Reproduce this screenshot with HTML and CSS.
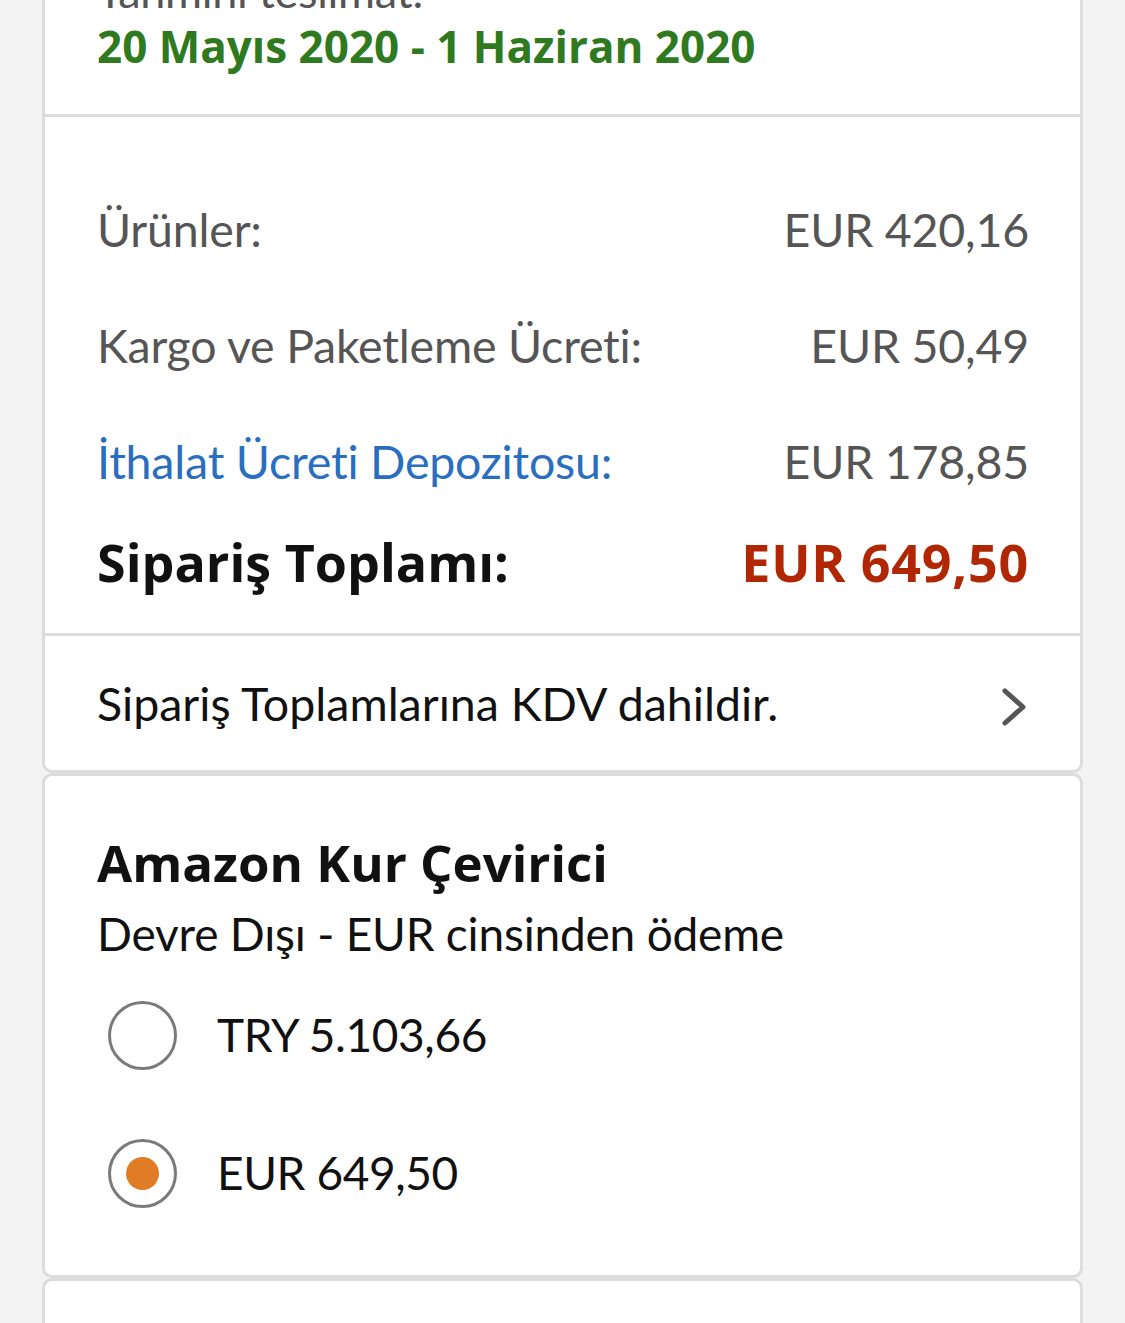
FILE: index.html
```html
<!DOCTYPE html>
<html lang="tr">
<head>
<meta charset="utf-8">
<title>Sipariş Özeti</title>
<link rel="stylesheet" href="styles.css">
</head>
<body>
<main class="page">
  <section class="card card-order">
    <div class="delivery">
      <div class="delivery-label">Tahmini teslimat:</div>
      <div class="delivery-date">20 Mayıs 2020 - 1 Haziran 2020</div>
    </div>
    <div class="summary">
      <div class="row"><span>Ürünler:</span><span>EUR 420,16</span></div>
      <div class="row"><span>Kargo ve Paketleme Ücreti:</span><span>EUR 50,49</span></div>
      <div class="row"><span class="link">İthalat Ücreti Depozitosu:</span><span>EUR 178,85</span></div>
      <div class="row total"><span>Sipariş Toplamı:</span><span class="price">EUR 649,50</span></div>
    </div>
    <div class="vat">
      <span>Sipariş Toplamlarına KDV dahildir.</span>
      <svg class="chevron" width="26" height="38" viewBox="0 0 26 38"><path d="M4 3 L22 19 L4 35" fill="none" stroke="#555" stroke-width="5" stroke-linecap="round" stroke-linejoin="round"/></svg>
    </div>
  </section>
  <section class="card card-currency">
    <h2 class="title">Amazon Kur Çevirici</h2>
    <div class="subtitle">Devre Dışı - EUR cinsinden ödeme</div>
    <div class="option"><span class="radio"></span><span>TRY 5.103,66</span></div>
    <div class="option"><span class="radio checked"></span><span>EUR 649,50</span></div>
  </section>
  <section class="card card-next"></section>
</main>
</body>
</html>
```
FILE: styles.css
```css
html, body {
  margin: 0;
  padding: 0;
}
body {
  background: #f3f3f3;
  font-family: "Lato", "Noto Sans", sans-serif;
  color: #111;
  overflow: hidden;
}
.page {
  padding: 0 42px;
  margin-top: -43px;
}
.card {
  background: #fff;
  border: 3px solid #dcdcdc;
  border-radius: 10px;
}
.delivery {
  padding: 6px 51px 38px 52px;
  border-bottom: 3px solid #dcdcdc;
}
.delivery-label {
  font-size: 45px;
  line-height: 50px;
  color: #555;
  letter-spacing: -0.3px;
}
.delivery-date {
  font-family: "Open Sans", "Lato", sans-serif;
  font-size: 44px;
  line-height: 60px;
  font-weight: 700;
  color: #2f7a1f;
}
.summary {
  padding: 54px 51px 28px 52px;
  border-bottom: 3px solid #dcdcdc;
}
.row {
  display: flex;
  justify-content: space-between;
  font-size: 46.5px;
  letter-spacing: -0.2px;
  line-height: 116px;
  color: #555;
}
.link {
  color: #2a6ebf;
}
.row.total {
  font-family: "Open Sans", "Lato", sans-serif;
  font-size: 52px;
  letter-spacing: 0;
  line-height: 86px;
  font-weight: 700;
  color: #111;
}
.price {
  color: #b12704;
  letter-spacing: 0.8px;
}
.vat {
  display: flex;
  justify-content: space-between;
  align-items: center;
  padding: 9px 53px 9px 52px;
  font-size: 46.5px;
  line-height: 116px;
  color: #111;
}
.chevron {
  display: block;
  margin-top: 8px;
}
.card-currency {
  padding: 51px 51px 33px 52px;
}
.title {
  margin: 0;
  font-family: "Open Sans", "Lato", sans-serif;
  font-size: 51px;
  line-height: 70px;
  font-weight: 700;
  color: #111;
}
.subtitle {
  margin-top: 5px;
  font-size: 46px;
  letter-spacing: -0.2px;
  line-height: 64px;
  color: #111;
}
.option {
  display: flex;
  align-items: center;
  gap: 40px;
  height: 138px;
  margin-left: 11px;
  font-size: 46px;
  letter-spacing: -0.4px;
  line-height: 138px;
  color: #111;
}
.radio {
  box-sizing: border-box;
  width: 69px;
  height: 69px;
  border: 3px solid #7a7a7a;
  border-radius: 50%;
  display: flex;
  align-items: center;
  justify-content: center;
  flex: none;
}
.radio.checked::after {
  content: "";
  width: 33px;
  height: 33px;
  border-radius: 50%;
  background: #e07b26;
}
.card-next {
  min-height: 120px;
}
```
